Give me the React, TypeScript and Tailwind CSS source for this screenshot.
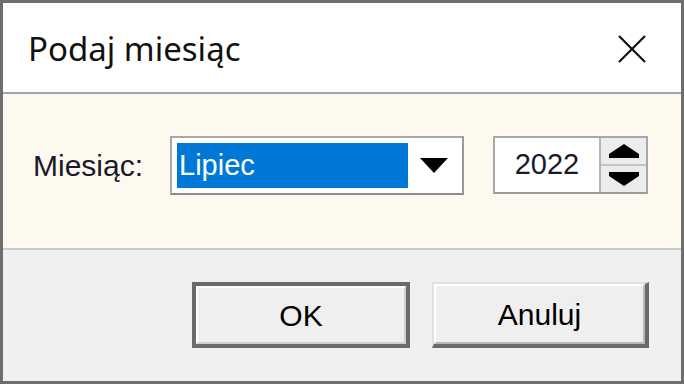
import React from "react";

const font = { fontFamily: '"Liberation Sans", Arial, sans-serif' };

function UpArrow() {
  return (
    <svg width="32" height="14" viewBox="0 0 32 14">
      <polygon points="16,0 31,10 31,14 1,14 1,10" fill="#000" />
    </svg>
  );
}
function DownArrow() {
  return (
    <svg width="32" height="14" viewBox="0 0 32 14">
      <polygon points="1,0 31,0 31,4 16,14 1,4" fill="#000" />
    </svg>
  );
}

export default function App() {
  return (
    <div
      className="w-[684px] h-[384px] border-[3px] border-[#6e6e6e] bg-white flex flex-col overflow-hidden"
      style={font}
    >
      {/* Title bar */}
      <div className="h-[89px] bg-white flex items-center justify-between pl-[25px] pr-[34px] shrink-0">
        <span
          className="text-[33px] text-[#111] leading-none pt-[2px]"
          style={{ fontFamily: '"Noto Sans", "Open Sans", sans-serif' }}
        >
          Podaj miesiąc
        </span>
        <svg width="30" height="30" viewBox="0 0 30 30" className="mt-[2px]">
          <path d="M2 2 L28 28 M28 2 L2 28" stroke="#111" strokeWidth="2.2" fill="none" />
        </svg>
      </div>
      <div className="h-[2px] bg-[#a3a3a3] shrink-0" />
      {/* Content */}
      <div className="h-[154px] bg-[#fdf9ef] flex items-start pt-[42px] pl-[30px] shrink-0">
        <div className="w-[137px] h-[59px] flex items-center text-[30px] text-[#1a1a2a]">
          Miesiąc:
        </div>
        <div className="w-[294px] h-[59px] border-2 border-[#a8a8a8] border-b-[#8c8c8c] border-r-[#9a9a9a] bg-white flex items-center pl-[5px] pr-[2px]">
          <div className="w-[231px] h-[45px] bg-[#0078d7] text-white text-[29px] flex items-center pl-[2px]">
            Lipiec
          </div>
          <div className="flex-1 flex items-center justify-center">
            <svg width="28" height="15" viewBox="0 0 28 15">
              <polygon points="0,0 28,0 14,15" fill="#000" />
            </svg>
          </div>
        </div>
        <div className="ml-[29px] w-[155px] h-[58px] border-2 border-[#a8a8a8] border-b-[#9a9a9a] bg-white flex">
          <div className="w-[104px] flex items-center justify-center text-[29px] text-[#1a1a2a]">
            2022
          </div>
          <div className="flex-1 flex flex-col border-l-2 border-[#b4b4b4]">
            <div className="flex-1 bg-[#ececec] border-b-2 border-[#c4c4c4] flex items-center justify-center">
              <UpArrow />
            </div>
            <div className="flex-1 bg-[#ececec] flex items-center justify-center">
              <DownArrow />
            </div>
          </div>
        </div>
      </div>
      <div className="h-[2px] bg-[#c9c9c9] shrink-0" />
      {/* Buttons */}
      <div className="flex-1 bg-[#f0f0f0] flex justify-end items-start pt-[32px] pr-[32px] gap-[22px]">
        <div className="w-[218px] h-[66px] border-[4px] border-[#6a6a6a] bg-[#efefef] flex">
          <div className="flex-1 border-2 border-white border-b-[#d0d0d0] border-r-[#d0d0d0] flex items-center justify-center text-[30px] text-black">
            OK
          </div>
        </div>
        <div className="w-[217px] h-[66px] border-t-2 border-l-2 border-b-[4px] border-r-[4px] border-t-[#e0e0e0] border-l-[#e0e0e0] border-b-[#6a6a6a] border-r-[#6a6a6a] bg-[#efefef] flex">
          <div className="flex-1 border-2 border-white border-b-[#b8b8b8] border-r-[#b8b8b8] flex items-center justify-center text-[30px] text-black">
            Anuluj
          </div>
        </div>
      </div>
    </div>
  );
}
